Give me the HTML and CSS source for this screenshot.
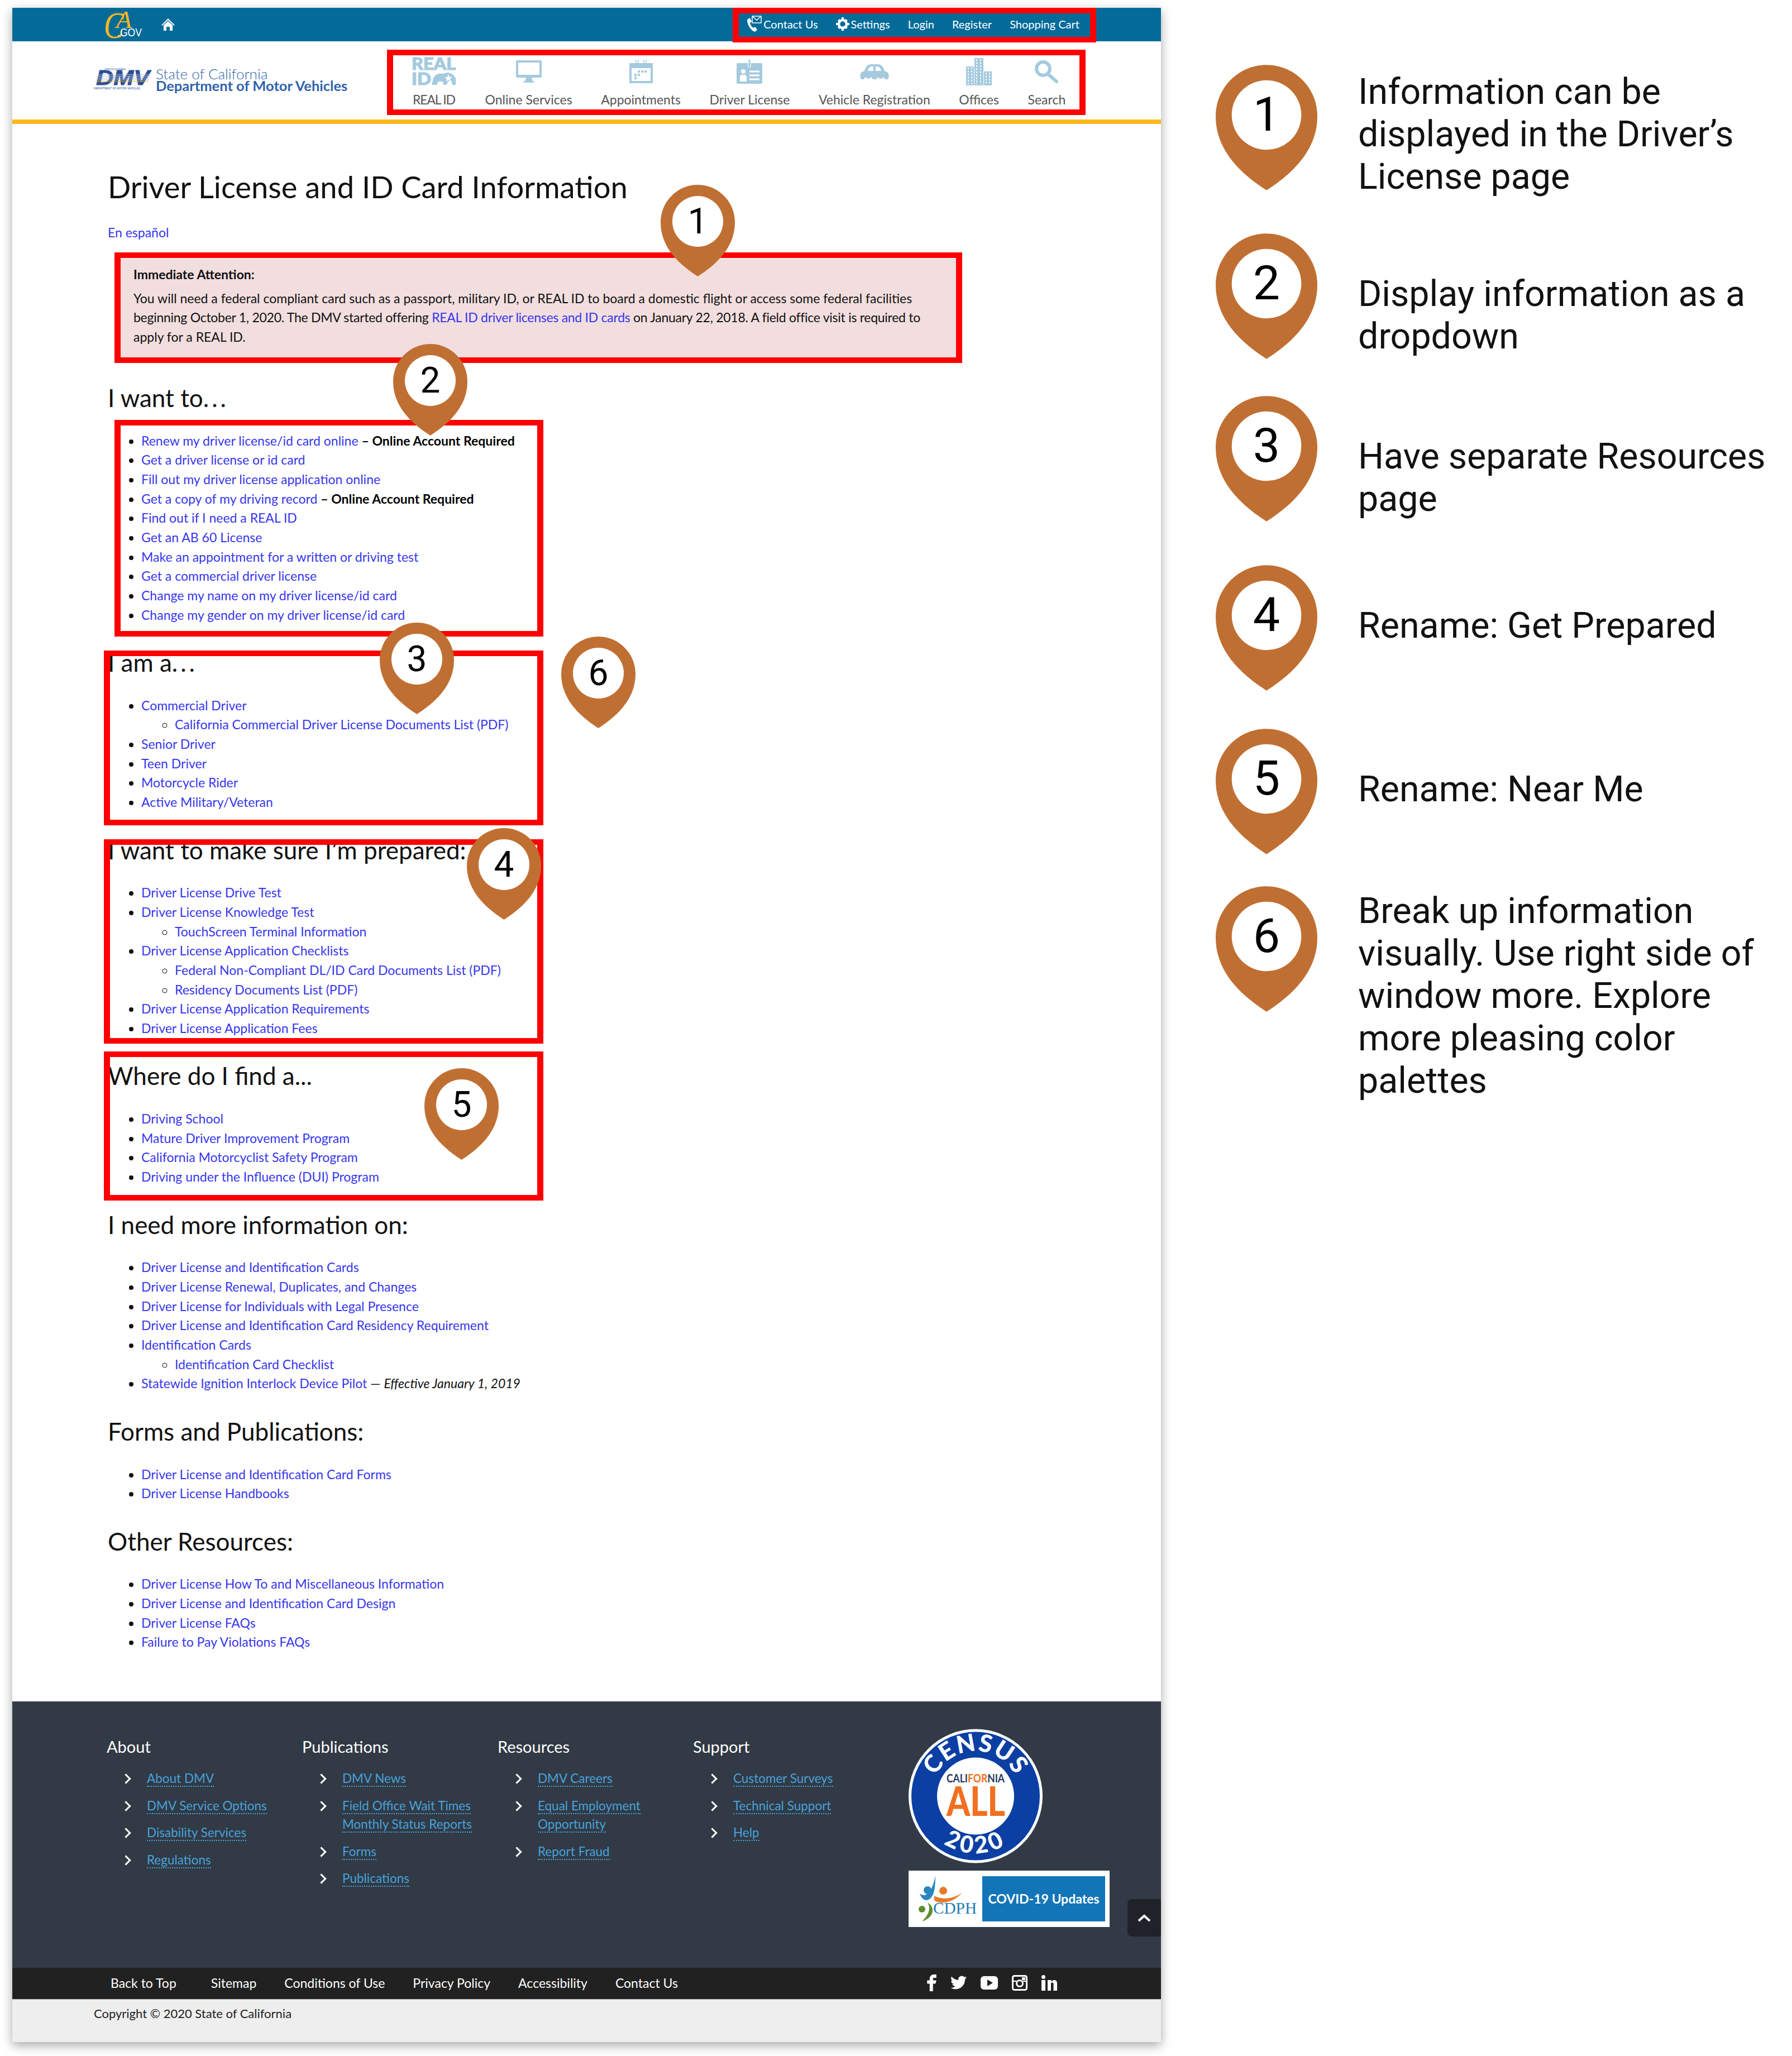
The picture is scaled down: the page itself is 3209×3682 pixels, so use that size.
FILE: index.html
```html
<!DOCTYPE html>
<html lang="en">
<head>
  <meta charset="UTF-8">
  <title>Driver License and ID Card Information</title>
  <link rel="stylesheet" href="styles.css">
</head>
<body>

  <div class="window">

    <div class="topbar">
      <svg class="ca-logo" viewBox="0 0 68 48" width="68" height="48">
        <text x="0" y="48" class="ca-c" textLength="36" lengthAdjust="spacingAndGlyphs">C</text>
        <text x="22" y="30" class="ca-a" textLength="28" lengthAdjust="spacingAndGlyphs">A</text>
        <text x="24" y="45" class="ca-gov" textLength="44" lengthAdjust="spacingAndGlyphs">.GOV</text>
      </svg>
      <svg class="home-icon" viewBox="0 0 24 22" width="24" height="22">
        <path d="M12 0 24 12 22.500 13 12 3 1.500 13 0 12z" fill="#fff"/>
        <path d="M12 5 20 12V22H15V15H9V22H4V12z" fill="#fff"/>
      </svg>
      <div class="util-links">
        <a class="util-link" href="#">
          <svg viewBox="0 0 28 32" width="28" height="32">
            <path d="M2 8 7 5 10 12 7 14C8 18 10 21 13 23L16 21 20 26 16 30C9 28 2 18 2 8z" fill="#fff"/>
            <rect x="11" y="2" width="16" height="12" fill="none" stroke="#fff" stroke-width="1.500"/>
            <path d="M11 2 19 9 27 2" fill="none" stroke="#fff" stroke-width="1.500"/>
          </svg>
          Contact Us
        </a>
        <a class="util-link" href="#">
          <svg viewBox="0 0 24 24" width="24" height="24">
            <circle cx="12" cy="12" r="7" fill="none" stroke="#fff" stroke-width="4.500"/>
            <path d="M10 0h4v4h-4zM10 20h4v4h-4zM0 10h4v4H0zM20 10h4v4h-4zM3 6l3-3 3 3-3 3zM15 18l3-3 3 3-3 3zM3 18l3-3 3 3-3 3zM15 6l3-3 3 3-3 3z" fill="#fff"/>
          </svg>
          Settings
        </a>
        <a class="util-link" href="#">Login</a>
        <a class="util-link" href="#">Register</a>
        <a class="util-link" href="#">Shopping Cart</a>
      </div>
    </div>

    <header class="site-header">
      <div class="brand">
        <svg class="dmv-logo" viewBox="0 0 104 40" width="104" height="40">
          <text x="19" y="4.500" class="dmv-tiny" textLength="38" lengthAdjust="spacingAndGlyphs">STATE OF CALIFORNIA</text>
          <text x="4" y="31" class="dmv-big" textLength="96" lengthAdjust="spacingAndGlyphs">DMV</text>
          <path d="M7 13H101M6 16H100M5 19H99M4 22H98" stroke="#b9c4d6" stroke-width="1.200"/>
          <path d="M3 25H97" stroke="#e9b524" stroke-width="1.200"/>
          <text x="0" y="39" class="dmv-tiny" textLength="83" lengthAdjust="spacingAndGlyphs">DEPARTMENT OF MOTOR VEHICLES</text>
        </svg>
        <div class="brand-text">
          <div class="brand-state">State of California</div>
          <div class="brand-dept">Department of Motor Vehicles</div>
        </div>
      </div>
      <nav class="main-nav">
        <a class="nav-item" href="#">
          <span class="nav-icon">
            <svg viewBox="0 0 80 52" width="80" height="52">
              <text x="0" y="23" class="realid-text" textLength="79" lengthAdjust="spacingAndGlyphs">REAL</text>
              <text x="0" y="50" class="realid-text" textLength="35" lengthAdjust="spacingAndGlyphs">ID</text>
              <path d="M36 50 39 38C42 31 50 29 56 30L64 28C70 28 76 32 79 38V50H73L71 42 65 44 63 50H57L56 44H48L45 50z" fill="#a5cadf"/>
              <path d="M66 31 68 36H73L69 39 71 44 66 41 62 44 63 39 59 36H64z" fill="#fff"/>
            </svg>
          </span>
          REAL ID
        </a>
        <a class="nav-item" href="#">
          <span class="nav-icon">
            <svg viewBox="0 0 46 40" width="46" height="40">
              <rect x="0" y="0" width="46" height="31" rx="2" fill="#a5cadf"/>
              <rect x="4" y="4" width="38" height="22" fill="#fff"/>
              <path d="M18 31h10l2 7H16z" fill="#a5cadf"/>
              <rect x="14" y="37" width="18" height="3" fill="#a5cadf"/>
            </svg>
          </span>
          Online Services
        </a>
        <a class="nav-item" href="#">
          <span class="nav-icon">
            <svg viewBox="0 0 42 42" width="42" height="42">
              <rect x="0" y="6" width="42" height="36" fill="#a5cadf"/>
              <rect x="4" y="15" width="34" height="23" fill="#fff"/>
              <path d="M12 0v10a2 2 0 0 0 4 0V0M26 0v10a2 2 0 0 0 4 0V0" fill="none" stroke="#a5cadf" stroke-width="1.500"/>
              <path d="M15 19h4v4h-4zM21 19h4v4h-4zM27 19h4v4h-4zM9 25h4v5H9zM15 25h4v4h-4zM9 31h4v4H9z" fill="#a5cadf"/>
            </svg>
          </span>
          Appointments
        </a>
        <a class="nav-item" href="#">
          <span class="nav-icon">
            <svg viewBox="0 0 46 44" width="46" height="44">
              <rect x="0" y="7" width="46" height="37" rx="2" fill="#a5cadf"/>
              <rect x="21" y="0" width="4" height="14" fill="#a5cadf" stroke="#fff" stroke-width="1"/>
              <circle cx="12" cy="22" r="4" fill="#fff"/>
              <path d="M6 40V32a4 4 0 0 1 4-4h4a4 4 0 0 1 4 4v8z" fill="#fff"/>
              <path d="M23 22h18M23 29h18M23 36h18" stroke="#fff" stroke-width="3"/>
            </svg>
          </span>
          Driver License
        </a>
        <a class="nav-item" href="#">
          <span class="nav-icon">
            <svg viewBox="0 0 52 27" width="52" height="27">
              <path d="M2 27C0 24 0 19 1 17 2 14 5 13 8 12 10 6 13 0 20 0H32C39 0 42 6 44 12 47 13 50 14 51 17 52 19 52 24 50 27H45A9 9 0 0 0 29 27H23A9 9 0 0 0 7 27z" fill="#a5cadf"/>
              <path d="M14 12C15 8 17 4 21 4H24V12zM28 4H31C35 4 37 8 38 12H28z" fill="#fff"/>
              <circle cx="15" cy="21" r="5" fill="#a5cadf"/>
              <circle cx="37" cy="21" r="5" fill="#a5cadf"/>
            </svg>
          </span>
          Vehicle Registration
        </a>
        <a class="nav-item" href="#">
          <span class="nav-icon">
            <svg viewBox="0 0 46 49" width="46" height="49">
              <rect x="15" y="0" width="16" height="49" fill="#a5cadf"/>
              <rect x="0" y="15" width="14" height="34" fill="#a5cadf"/>
              <rect x="32" y="24" width="14" height="25" fill="#a5cadf"/>
              <path d="M19 2v45M26 2v45M4 17v30M10 17v30M36 26v21M42 26v21" stroke="#fff" stroke-width="2" stroke-dasharray="3 2.500"/>
            </svg>
          </span>
          Offices
        </a>
        <a class="nav-item" href="#">
          <span class="nav-icon">
            <svg viewBox="0 0 44 40" width="44" height="40">
              <circle cx="16" cy="15" r="12" fill="none" stroke="#a5cadf" stroke-width="6"/>
              <path d="M25 25 40 38" stroke="#a5cadf" stroke-width="6" stroke-linecap="round"/>
            </svg>
          </span>
          Search
        </a>
      </nav>
    </header>

    <div class="gold-rule"></div>

    <main class="content">
      <h1>Driver License and ID Card Information</h1>
      <p class="lang-link"><a href="#">En español</a></p>

      <div class="alert">
        <div class="alert-title">Immediate Attention:</div>
        <p>You will need a federal compliant card such as a passport, military ID, or REAL ID to board a domestic flight or access some federal facilities<br>
        <span class="tight">beginning October 1, 2020. The DMV started offering <a href="#">REAL ID driver licenses and ID cards</a> on January 22, 2018. A field office visit is required to</span><br>
        apply for a REAL ID.</p>
      </div>

      <h2>I want to<span class="dots">...</span></h2>
      <ul>
        <li><a href="#">Renew my driver license/id card online</a> <strong>– Online Account Required</strong></li>
        <li><a href="#">Get a driver license or id card</a></li>
        <li><a href="#">Fill out my driver license application online</a></li>
        <li><a href="#">Get a copy of my driving record</a> <strong>– Online Account Required</strong></li>
        <li><a href="#">Find out if I need a REAL ID</a></li>
        <li><a href="#">Get an AB 60 License</a></li>
        <li><a href="#">Make an appointment for a written or driving test</a></li>
        <li><a href="#">Get a commercial driver license</a></li>
        <li><a href="#">Change my name on my driver license/id card</a></li>
        <li><a href="#">Change my gender on my driver license/id card</a></li>
      </ul>

      <h2>I am a<span class="dots">...</span></h2>
      <ul>
        <li><a href="#">Commercial Driver</a>
          <ul>
            <li><a href="#">California Commercial Driver License Documents List (PDF)</a></li>
          </ul>
        </li>
        <li><a href="#">Senior Driver</a></li>
        <li><a href="#">Teen Driver</a></li>
        <li><a href="#">Motorcycle Rider</a></li>
        <li><a href="#">Active Military/Veteran</a></li>
      </ul>

      <h2>I want to make sure I’m prepared:</h2>
      <ul>
        <li><a href="#">Driver License Drive Test</a></li>
        <li><a href="#">Driver License Knowledge Test</a>
          <ul>
            <li><a href="#">TouchScreen Terminal Information</a></li>
          </ul>
        </li>
        <li><a href="#">Driver License Application Checklists</a>
          <ul>
            <li><a href="#">Federal Non-Compliant DL/ID Card Documents List (PDF)</a></li>
            <li><a href="#">Residency Documents List (PDF)</a></li>
          </ul>
        </li>
        <li><a href="#">Driver License Application Requirements</a></li>
        <li><a href="#">Driver License Application Fees</a></li>
      </ul>

      <h2>Where do I find a...</h2>
      <ul>
        <li><a href="#">Driving School</a></li>
        <li><a href="#">Mature Driver Improvement Program</a></li>
        <li><a href="#">California Motorcyclist Safety Program</a></li>
        <li><a href="#">Driving under the Influence (DUI) Program</a></li>
      </ul>

      <h2>I need more information on:</h2>
      <ul>
        <li><a href="#">Driver License and Identification Cards</a></li>
        <li><a href="#">Driver License Renewal, Duplicates, and Changes</a></li>
        <li><a href="#">Driver License for Individuals with Legal Presence</a></li>
        <li><a href="#">Driver License and Identification Card Residency Requirement</a></li>
        <li><a href="#">Identification Cards</a>
          <ul>
            <li><a href="#">Identification Card Checklist</a></li>
          </ul>
        </li>
        <li><a href="#">Statewide Ignition Interlock Device Pilot</a> — <em>Effective January 1, 2019</em></li>
      </ul>

      <h2>Forms and Publications:</h2>
      <ul>
        <li><a href="#">Driver License and Identification Card Forms</a></li>
        <li><a href="#">Driver License Handbooks</a></li>
      </ul>

      <h2>Other Resources:</h2>
      <ul>
        <li><a href="#">Driver License How To and Miscellaneous Information</a></li>
        <li><a href="#">Driver License and Identification Card Design</a></li>
        <li><a href="#">Driver License FAQs</a></li>
        <li><a href="#">Failure to Pay Violations FAQs</a></li>
      </ul>
    </main>

    <footer class="site-footer">
      <div class="footer-cols">
        <div>
          <h4>About</h4>
          <ul class="footer-list">
            <li><a href="#">About DMV</a></li>
            <li><a href="#">DMV Service Options</a></li>
            <li><a href="#">Disability Services</a></li>
            <li><a href="#">Regulations</a></li>
          </ul>
        </div>
        <div>
          <h4>Publications</h4>
          <ul class="footer-list">
            <li><a href="#">DMV News</a></li>
            <li><a href="#">Field Office Wait Times Monthly Status Reports</a></li>
            <li><a href="#">Forms</a></li>
            <li><a href="#">Publications</a></li>
          </ul>
        </div>
        <div>
          <h4>Resources</h4>
          <ul class="footer-list">
            <li><a href="#">DMV Careers</a></li>
            <li><a href="#">Equal Employment Opportunity</a></li>
            <li><a href="#">Report Fraud</a></li>
          </ul>
        </div>
        <div>
          <h4>Support</h4>
          <ul class="footer-list">
            <li><a href="#">Customer Surveys</a></li>
            <li><a href="#">Technical Support</a></li>
            <li><a href="#">Help</a></li>
          </ul>
        </div>
      </div>
      <div class="badges">
        <svg class="census" viewBox="0 0 240 241" width="240" height="241">
          <defs>
            <path id="census-top" d="M40 120A80 80 0 0 1 200 120"/>
            <path id="census-bottom" d="M17 120A103 103 0 0 0 223 120"/>
          </defs>
          <circle cx="120" cy="120.500" r="120" fill="#fff"/>
          <circle cx="120" cy="120.500" r="115" fill="#0b3fa3"/>
          <circle cx="120" cy="120.500" r="69" fill="#fff"/>
          <text class="census-arc"><textPath href="#census-top" startOffset="50%" text-anchor="middle">CENSUS</textPath></text>
          <text class="census-arc census-year"><textPath href="#census-bottom" startOffset="50%" text-anchor="middle">2020</textPath></text>
          <text x="120" y="96" class="census-ca" text-anchor="middle" textLength="104" lengthAdjust="spacingAndGlyphs">CALI<tspan class="census-for">FOR</tspan>NIA</text>
          <text x="68" y="156" class="census-all" textLength="105" lengthAdjust="spacingAndGlyphs">ALL</text>
        </svg>
        <div class="covid">
          <svg viewBox="0 0 124 84" width="124" height="84">
            <circle cx="26" cy="26" r="7" fill="#2a86c0"/>
            <circle cx="54" cy="27" r="7" fill="#e97a27"/>
            <circle cx="16" cy="60" r="6" fill="#5c8f2e"/>
            <path d="M12 32C22 40 34 32 40 0 40 22 38 42 24 44 18 44 14 38 12 32z" fill="#2a86c0"/>
            <path d="M38 36C50 44 74 42 88 30 76 46 50 54 38 44z" fill="#e97a27"/>
            <path d="M26 48C34 62 24 74 16 82 36 76 42 58 26 48z" fill="#5c8f2e"/>
            <text x="36" y="68" class="cdph" textLength="78" lengthAdjust="spacingAndGlyphs">CDPH</text>
          </svg>
          <div class="covid-label">COVID-19 Updates</div>
        </div>
      </div>
      <a class="to-top" href="#">
        <svg viewBox="0 0 24 14" width="24" height="14"><path d="M2 12 12 3 22 12" fill="none" stroke="#fff" stroke-width="4"/></svg>
      </a>
    </footer>

    <div class="footer-bar">
      <a href="#">Back to Top</a>
      <a href="#">Sitemap</a>
      <a href="#">Conditions of Use</a>
      <a href="#">Privacy Policy</a>
      <a href="#">Accessibility</a>
      <a href="#">Contact Us</a>
      <div class="social">
        <svg viewBox="6 4 11 20" width="17" height="30"><path d="M14 8h3V4h-3c-2.800 0-5 2.200-5 5v2H6v4h3v9h4v-9h3l1-4h-4V9c0-.6.4-1 1-1z" fill="#fff"/></svg>
        <svg viewBox="0 0 24 24" width="29" height="29"><path d="M24 4.557a9.830 9.830 0 0 1-2.828.775 4.932 4.932 0 0 0 2.165-2.724 9.864 9.864 0 0 1-3.127 1.184 4.916 4.916 0 0 0-8.380 4.482C7.690 8.094 4.067 6.130 1.640 3.161a4.822 4.822 0 0 0-.666 2.475c0 1.710.870 3.213 2.188 4.096a4.904 4.904 0 0 1-2.228-.616v.061a4.923 4.923 0 0 0 3.946 4.827 4.996 4.996 0 0 1-2.212.085 4.936 4.936 0 0 0 4.604 3.417 9.867 9.867 0 0 1-6.102 2.105c-.390 0-.779-.023-1.170-.067a13.995 13.995 0 0 0 7.557 2.209c9.053 0 14-7.496 14-13.986 0-.210 0-.420-.015-.630A9.935 9.935 0 0 0 24 4.557z" fill="#fff"/></svg>
        <svg viewBox="0 0 31 24" width="31" height="24"><rect width="31" height="24" rx="6" fill="#fff"/><path d="M12 6 22 12 12 18z" fill="#212121"/></svg>
        <svg viewBox="0 0 28 28" width="28" height="28"><rect x="1.500" y="1.500" width="25" height="25" rx="3" fill="none" stroke="#fff" stroke-width="3"/><circle cx="14" cy="15" r="5.500" fill="none" stroke="#fff" stroke-width="3"/><rect x="18" y="4" width="6" height="5" fill="#fff"/><path d="M2 11H8M20 11H26" stroke="#fff" stroke-width="2"/></svg>
        <svg viewBox="0 0 28 28" width="28" height="28"><circle cx="3.500" cy="3.500" r="3.500" fill="#fff"/><rect x="0" y="9" width="7" height="19" fill="#fff"/><path d="M11 9h6.500v3C19 10 21 9 23 9c3.500 0 5 2.500 5 6v13h-6.500V16c0-2-.8-2.800-2-2.800-1.500 0-2.500 1-2.500 3V28H11z" fill="#fff"/></svg>
      </div>
    </div>

    <div class="copyright">Copyright © 2020 State of California</div>

    <!-- review marks drawn over the page -->
    <div class="mark mark-util"></div>
    <div class="mark mark-nav"></div>
    <div class="mark mark-alert"></div>
    <div class="mark mark-want"></div>
    <div class="mark mark-am"></div>
    <div class="mark mark-prepared"></div>
    <div class="mark mark-find"></div>

    <div class="pin pin-small pin-1">
      <svg viewBox="0 0 133 164"><path d="M66.500 0C103 0 133 30 133 67C133 103 112 135 66.500 164C21 135 0 103 0 67C0 30 30 0 66.500 0z"/><circle cx="66.500" cy="65.500" r="45.500"/></svg>
      <span>1</span>
    </div>
    <div class="pin pin-small pin-2">
      <svg viewBox="0 0 133 164"><path d="M66.500 0C103 0 133 30 133 67C133 103 112 135 66.500 164C21 135 0 103 0 67C0 30 30 0 66.500 0z"/><circle cx="66.500" cy="65.500" r="45.500"/></svg>
      <span>2</span>
    </div>
    <div class="pin pin-small pin-3">
      <svg viewBox="0 0 133 164"><path d="M66.500 0C103 0 133 30 133 67C133 103 112 135 66.500 164C21 135 0 103 0 67C0 30 30 0 66.500 0z"/><circle cx="66.500" cy="65.500" r="45.500"/></svg>
      <span>3</span>
    </div>
    <div class="pin pin-small pin-4">
      <svg viewBox="0 0 133 164"><path d="M66.500 0C103 0 133 30 133 67C133 103 112 135 66.500 164C21 135 0 103 0 67C0 30 30 0 66.500 0z"/><circle cx="66.500" cy="65.500" r="45.500"/></svg>
      <span>4</span>
    </div>
    <div class="pin pin-small pin-5">
      <svg viewBox="0 0 133 164"><path d="M66.500 0C103 0 133 30 133 67C133 103 112 135 66.500 164C21 135 0 103 0 67C0 30 30 0 66.500 0z"/><circle cx="66.500" cy="65.500" r="45.500"/></svg>
      <span>5</span>
    </div>
    <div class="pin pin-small pin-6">
      <svg viewBox="0 0 133 164"><path d="M66.500 0C103 0 133 30 133 67C133 103 112 135 66.500 164C21 135 0 103 0 67C0 30 30 0 66.500 0z"/><circle cx="66.500" cy="65.500" r="45.500"/></svg>
      <span>6</span>
    </div>
  </div>

  <aside class="legend">
    <div class="legend-item">
      <div class="pin"><svg viewBox="0 0 133 164"><path d="M66.500 0C103 0 133 30 133 67C133 103 112 135 66.500 164C21 135 0 103 0 67C0 30 30 0 66.500 0z"/><circle cx="66.500" cy="65.500" r="45.500"/></svg><span>1</span></div>
      <p class="legend-text legend-long">Information can be<br>displayed in the Driver’s<br>License page</p>
    </div>
    <div class="legend-item">
      <div class="pin"><svg viewBox="0 0 133 164"><path d="M66.500 0C103 0 133 30 133 67C133 103 112 135 66.500 164C21 135 0 103 0 67C0 30 30 0 66.500 0z"/><circle cx="66.500" cy="65.500" r="45.500"/></svg><span>2</span></div>
      <p class="legend-text">Display information as a<br>dropdown</p>
    </div>
    <div class="legend-item">
      <div class="pin"><svg viewBox="0 0 133 164"><path d="M66.500 0C103 0 133 30 133 67C133 103 112 135 66.500 164C21 135 0 103 0 67C0 30 30 0 66.500 0z"/><circle cx="66.500" cy="65.500" r="45.500"/></svg><span>3</span></div>
      <p class="legend-text">Have separate Resources<br>page</p>
    </div>
    <div class="legend-item">
      <div class="pin"><svg viewBox="0 0 133 164"><path d="M66.500 0C103 0 133 30 133 67C133 103 112 135 66.500 164C21 135 0 103 0 67C0 30 30 0 66.500 0z"/><circle cx="66.500" cy="65.500" r="45.500"/></svg><span>4</span></div>
      <p class="legend-text">Rename: Get Prepared</p>
    </div>
    <div class="legend-item">
      <div class="pin"><svg viewBox="0 0 133 164"><path d="M66.500 0C103 0 133 30 133 67C133 103 112 135 66.500 164C21 135 0 103 0 67C0 30 30 0 66.500 0z"/><circle cx="66.500" cy="65.500" r="45.500"/></svg><span>5</span></div>
      <p class="legend-text">Rename: Near Me</p>
    </div>
    <div class="legend-item">
      <div class="pin"><svg viewBox="0 0 133 164"><path d="M66.500 0C103 0 133 30 133 67C133 103 112 135 66.500 164C21 135 0 103 0 67C0 30 30 0 66.500 0z"/><circle cx="66.500" cy="65.500" r="45.500"/></svg><span>6</span></div>
      <p class="legend-text legend-long legend-last">Break up information<br>visually. Use right side of<br>window more. Explore<br>more pleasing color<br>palettes</p>
    </div>
  </aside>

</body>
</html>
```

FILE: styles.css
```css
body {
  margin: 0;
  background: #fff;
  color: #111;
  font-family: Lato, "Noto Sans", sans-serif;
  font-size: 23px;
  display: flex;
  width: 3209px;
  height: 3682px;
  overflow: hidden;
}
a {
  color: #3636f0;
  text-decoration: none;
}

.window {
  position: relative;
  flex: none;
  width: 2057px;
  height: 3643px;
  margin: 14px 0 0 22px;
  display: flex;
  flex-direction: column;
  box-shadow: 0 6px 18px rgba(0,0,0,0.35);
}

/* top strip */
.topbar {
  flex: none;
  height: 60px;
  background: #046b99;
  display: flex;
  align-items: center;
  padding: 0 146px 0 164px;
}
.ca-logo,
.dmv-logo,
.nav-icon svg {
  overflow: visible;
}
.ca-c,
.ca-a {
  font-family: "Liberation Serif", serif;
  font-style: italic;
  fill: #fdb81e;
}
.ca-c {
  font-size: 68px;
}
.ca-a {
  font-size: 45px;
}
.ca-gov {
  font-family: "Liberation Sans", sans-serif;
  font-size: 20px;
  fill: #fff;
}
.home-icon {
  margin-left: 35px;
}
.util-links {
  margin-left: auto;
  margin-top: -3px;
  display: flex;
  align-items: center;
  gap: 32px;
}
.util-link {
  color: #fff;
  font-size: 20px;
  display: flex;
  align-items: center;
  gap: 3px;
}

/* logo and main menu */
.site-header {
  flex: none;
  height: 140px;
  display: flex;
  padding-left: 146px;
}
.brand {
  flex: none;
  width: 569px;
  display: flex;
  gap: 7px;
  padding-top: 47px;
  align-items: flex-start;
}
.dmv-tiny {
  font-family: "Liberation Sans", sans-serif;
  font-size: 5px;
  fill: #2c4f94;
}
.dmv-big {
  font-family: "Liberation Sans", sans-serif;
  font-weight: bold;
  font-style: italic;
  font-size: 36px;
  fill: #2c4f94;
  stroke: #2c4f94;
  stroke-width: 0.800px;
}
.brand-text {
  color: #2f62ac;
  white-space: nowrap;
}
.brand-state {
  font-weight: 300;
  font-size: 26px;
  line-height: 22px;
}
.brand-dept {
  font-weight: 700;
  font-size: 25.500px;
  line-height: 21px;
}
.main-nav {
  display: flex;
  gap: 51.600px;
  padding-top: 24px;
}
.nav-item {
  color: #555;
  display: flex;
  flex-direction: column;
  align-items: center;
  font-size: 23px;
  line-height: 30px;
  white-space: nowrap;
}
.nav-item:first-child {
  letter-spacing: -1.200px;
}
.nav-icon {
  height: 60px;
  margin-bottom: 5px;
  display: flex;
  align-items: center;
  justify-content: center;
}
.realid-text {
  font-family: Lato, sans-serif;
  font-weight: 900;
  font-size: 31px;
  fill: #a5cadf;
  stroke: #a5cadf;
  stroke-width: 1.200px;
  letter-spacing: 0;
}
.gold-rule {
  flex: none;
  height: 8px;
  background: #fdb81e;
}

/* page body */
.content {
  flex: 1;
  padding: 82px 0 0 171px;
}
h1 {
  margin: 0;
  font-weight: 400;
  font-size: 54.300px;
  line-height: 60px;
  color: #111;
}
.lang-link {
  margin: 35px 0 29px;
  line-height: 35px;
}
.alert {
  width: 1496px;
  height: 177px;
  box-sizing: border-box;
  margin: 0 0 46px 23px;
  padding: 11px 0 0 23px;
  background: #f2dede;
  line-height: 34.700px;
  white-space: nowrap;
}
.alert-title {
  font-weight: 700;
  margin-bottom: 8px;
}
.alert p {
  margin: 0;
}
.tight {
  letter-spacing: -0.270px;
}
h2 {
  margin: 41.900px 0 33.700px;
  font-weight: 400;
  font-size: 44px;
  line-height: 52px;
  color: #111;
}
.dots {
  letter-spacing: 5px;
}
.content ul {
  margin: 0;
  padding-left: 60px;
  line-height: 34.650px;
}
.content ul ul {
  padding-left: 60px;
}
strong {
  color: #000;
}

/* footer */
.site-footer {
  position: relative;
  flex: none;
  box-sizing: border-box;
  height: 477px;
  background: #323a45;
  padding: 49px 0 0 169px;
  display: flex;
}
.footer-cols {
  flex: none;
  width: 1436px;
  display: grid;
  grid-template-columns: repeat(4, 350px);
  padding-top: 15px;
}
h4 {
  margin: 0 0 23px;
  font-weight: 400;
  font-size: 29px;
  line-height: 34px;
  color: #fff;
}
.footer-list {
  list-style: none;
  margin: 0;
  padding: 0;
  font-size: 22.500px;
  line-height: 33.500px;
}
.footer-list li {
  position: relative;
  padding-left: 72px;
  width: 245px;
  margin-bottom: 15px;
}
.footer-list li::before {
  content: "";
  position: absolute;
  left: 28px;
  top: 11px;
  width: 10px;
  height: 10px;
  border-top: 3px solid #fff;
  border-right: 3px solid #fff;
  transform: rotate(45deg);
}
.footer-list a {
  color: #46a2dc;
  border-bottom: 2px dotted #46a2dc;
}
.badges {
  display: flex;
  flex-direction: column;
  gap: 13px;
}
.census {
  display: block;
}
.census-arc {
  font-family: Lato, sans-serif;
  font-weight: 900;
  font-size: 43px;
  fill: #fff;
  letter-spacing: 2px;
}
.census-year {
  font-size: 42px;
  letter-spacing: 6px;
}
.census-ca {
  font-family: Lato, sans-serif;
  font-weight: 700;
  font-size: 20px;
  fill: #26385e;
}
.census-for {
  fill: #f26f21;
}
.census-all {
  font-family: Lato, sans-serif;
  font-weight: 900;
  font-size: 72px;
  fill: #f26f21;
}
.covid {
  width: 360px;
  height: 101px;
  box-sizing: border-box;
  background: #fff;
  padding: 8px;
  display: flex;
  align-items: center;
  justify-content: space-between;
}
.cdph {
  font-family: "Liberation Serif", serif;
  font-size: 30px;
  fill: #1d7db5;
}
.covid-label {
  width: 220px;
  height: 81px;
  background: #1175b8;
  color: #fff;
  font-weight: 700;
  font-size: 23px;
  line-height: 81px;
  text-align: center;
  white-space: nowrap;
}
.to-top {
  position: absolute;
  right: 0;
  top: 354px;
  width: 60px;
  height: 67px;
  background: #1f2329;
  border-radius: 8px 0 0 8px;
  display: flex;
  align-items: center;
  justify-content: center;
}
.footer-bar {
  flex: none;
  height: 56px;
  box-sizing: border-box;
  padding: 0 186px 3px 176px;
  background: #212121;
  display: flex;
  align-items: center;
  gap: 50px;
}
.footer-bar a {
  color: #fff;
}
.footer-bar a:first-child {
  margin-right: 12px;
}
.social {
  margin-left: auto;
  display: flex;
  align-items: center;
  gap: 25px;
}
.copyright {
  flex: none;
  height: 77px;
  box-sizing: border-box;
  padding: 8px 0 0 146px;
  font-size: 22px;
  line-height: 34px;
  background: #eee;
  border-top: 1px solid #bbb;
  color: #222;
}

/* red review boxes */
.mark {
  position: absolute;
  box-sizing: border-box;
  border-style: solid;
  border-color: #f00;
  border-width: 10px 11px;
}
.mark-util { left: 1290px; top: 0; width: 651px; height: 62px; }
.mark-nav { left: 671px; top: 75px; width: 1251px; height: 117px; }
.mark-alert { left: 183px; top: 438px; width: 1518px; height: 198px; }
.mark-want { left: 183px; top: 738px; width: 768px; height: 388px; }
.mark-am { left: 164px; top: 1151px; width: 787px; height: 313px; }
.mark-prepared { left: 164px; top: 1489px; width: 787px; height: 366px; }
.mark-find { left: 164px; top: 1869px; width: 787px; height: 267px; }

/* numbered pins */
.pin {
  position: relative;
  flex: none;
  width: 182px;
  height: 225px;
}
.pin svg {
  display: block;
  width: 100%;
  height: 100%;
}
.pin path {
  fill: #c06f33;
}
.pin circle {
  fill: #fff;
}
.pin span {
  position: absolute;
  left: 0;
  right: 0;
  top: 39px;
  text-align: center;
  font-family: Roboto, sans-serif;
  font-size: 86px;
  line-height: 100px;
  color: #000;
}
.pin-small {
  position: absolute;
  width: 133px;
  height: 164px;
}
.pin-small span {
  top: 28px;
  font-size: 64px;
  line-height: 76px;
}
.pin-1 { left: 1161px; top: 317px; }
.pin-2 { left: 682px; top: 602px; }
.pin-3 { left: 658px; top: 1101px; }
.pin-4 { left: 814px; top: 1469px; }
.pin-5 { left: 738px; top: 1899px; }
.pin-6 { left: 983px; top: 1126px; }

/* legend on the right */
.legend {
  flex: none;
  margin-left: 98px;
  padding-top: 116px;
  display: grid;
  grid-template-rows: 302px 291px 303px 293px 282px auto;
  align-content: start;
}
.legend-item {
  display: flex;
  gap: 73px;
  align-items: flex-start;
}
.legend-text {
  margin: 0;
  padding-top: 70px;
  font-family: Roboto, sans-serif;
  font-size: 64.500px;
  line-height: 76px;
  color: #111;
  white-space: nowrap;
}
.legend-long {
  padding-top: 10px;
}
.legend-last {
  padding-top: 6px;
}
```
